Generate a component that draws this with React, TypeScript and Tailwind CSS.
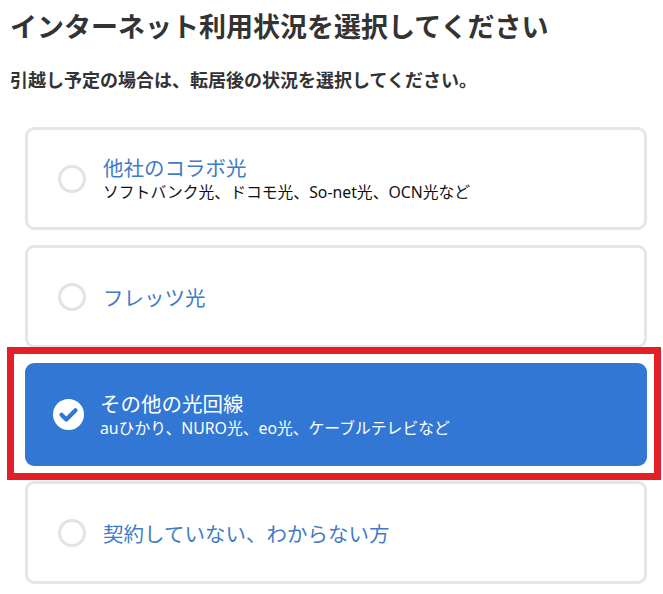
import React from "react";

const font = { fontFamily: '"Noto Sans CJK JP", "Noto Sans", sans-serif' };
const subFont = { fontFamily: '"Noto Sans", "Noto Sans CJK JP", sans-serif' };

function Radio() {
  return <div className="h-[28px] w-[28px] shrink-0 rounded-full border-[3px] border-[#e3e3e3] bg-white" />;
}

function CheckIcon() {
  return (
    <svg width="31" height="31" viewBox="0 0 31 31" className="shrink-0">
      <circle cx="15.5" cy="15.5" r="15.5" fill="#ffffff" />
      <path d="M8.5 15.8 L13.3 20.5 L22.5 11.3" fill="none" stroke="#3377d4" strokeWidth="4.2" strokeLinecap="round" strokeLinejoin="round" />
    </svg>
  );
}

function Card({ label, sub }: { label: string; sub?: string }) {
  return (
    <div className="flex h-[103px] items-center rounded-[9px] border-[3px] border-[#e6e6e6] bg-white pl-[30px]">
      <Radio />
      <div className="ml-[17px] flex flex-col">
        <span className="text-[20.5px] leading-[24px] text-[#3f7bc8]">{label}</span>
        {sub && (
          <span className="mt-[3px] text-[15.8px] leading-[21px] text-[#111111]" style={subFont}>
            {sub}
          </span>
        )}
      </div>
    </div>
  );
}

export default function App() {
  return (
    <div className="min-h-[594px] w-[663px] bg-white" style={font}>
      <div className="pl-[10px] pt-[10px]">
        <h1 className="text-[27px] font-bold leading-[32px] text-[#333333]">インターネット利用状況を選択してください</h1>
        <p className="mt-[25px] text-[18px] font-bold leading-[24px] text-[#333333]">引越し予定の場合は、転居後の状況を選択してください。</p>
      </div>
      <div className="ml-[25px] mr-[16px] mt-[36px] flex flex-col gap-[15px]">
        <Card label="他社のコラボ光" sub="ソフトバンク光、ドコモ光、So-net光、OCN光など" />
        <Card label="フレッツ光" />
        <div className="relative">
          <div className="flex h-[103px] items-center rounded-[9px] border-[3px] border-[#3377d4] bg-[#3377d4] pl-[25px]">
            <CheckIcon />
            <div className="ml-[16px] flex flex-col">
              <span className="text-[20.5px] leading-[24px] text-white">その他の光回線</span>
              <span className="mt-[3px] text-[15.8px] leading-[21px] text-white" style={subFont}>
                auひかり、NURO光、eo光、ケーブルテレビなど
              </span>
            </div>
          </div>
          <div className="pointer-events-none absolute bottom-[-14px] left-[-18px] right-[-14px] top-[-16px] border-[7px] border-[#e41e26]" />
        </div>
        <Card label="契約していない、わからない方" />
      </div>
    </div>
  );
}
